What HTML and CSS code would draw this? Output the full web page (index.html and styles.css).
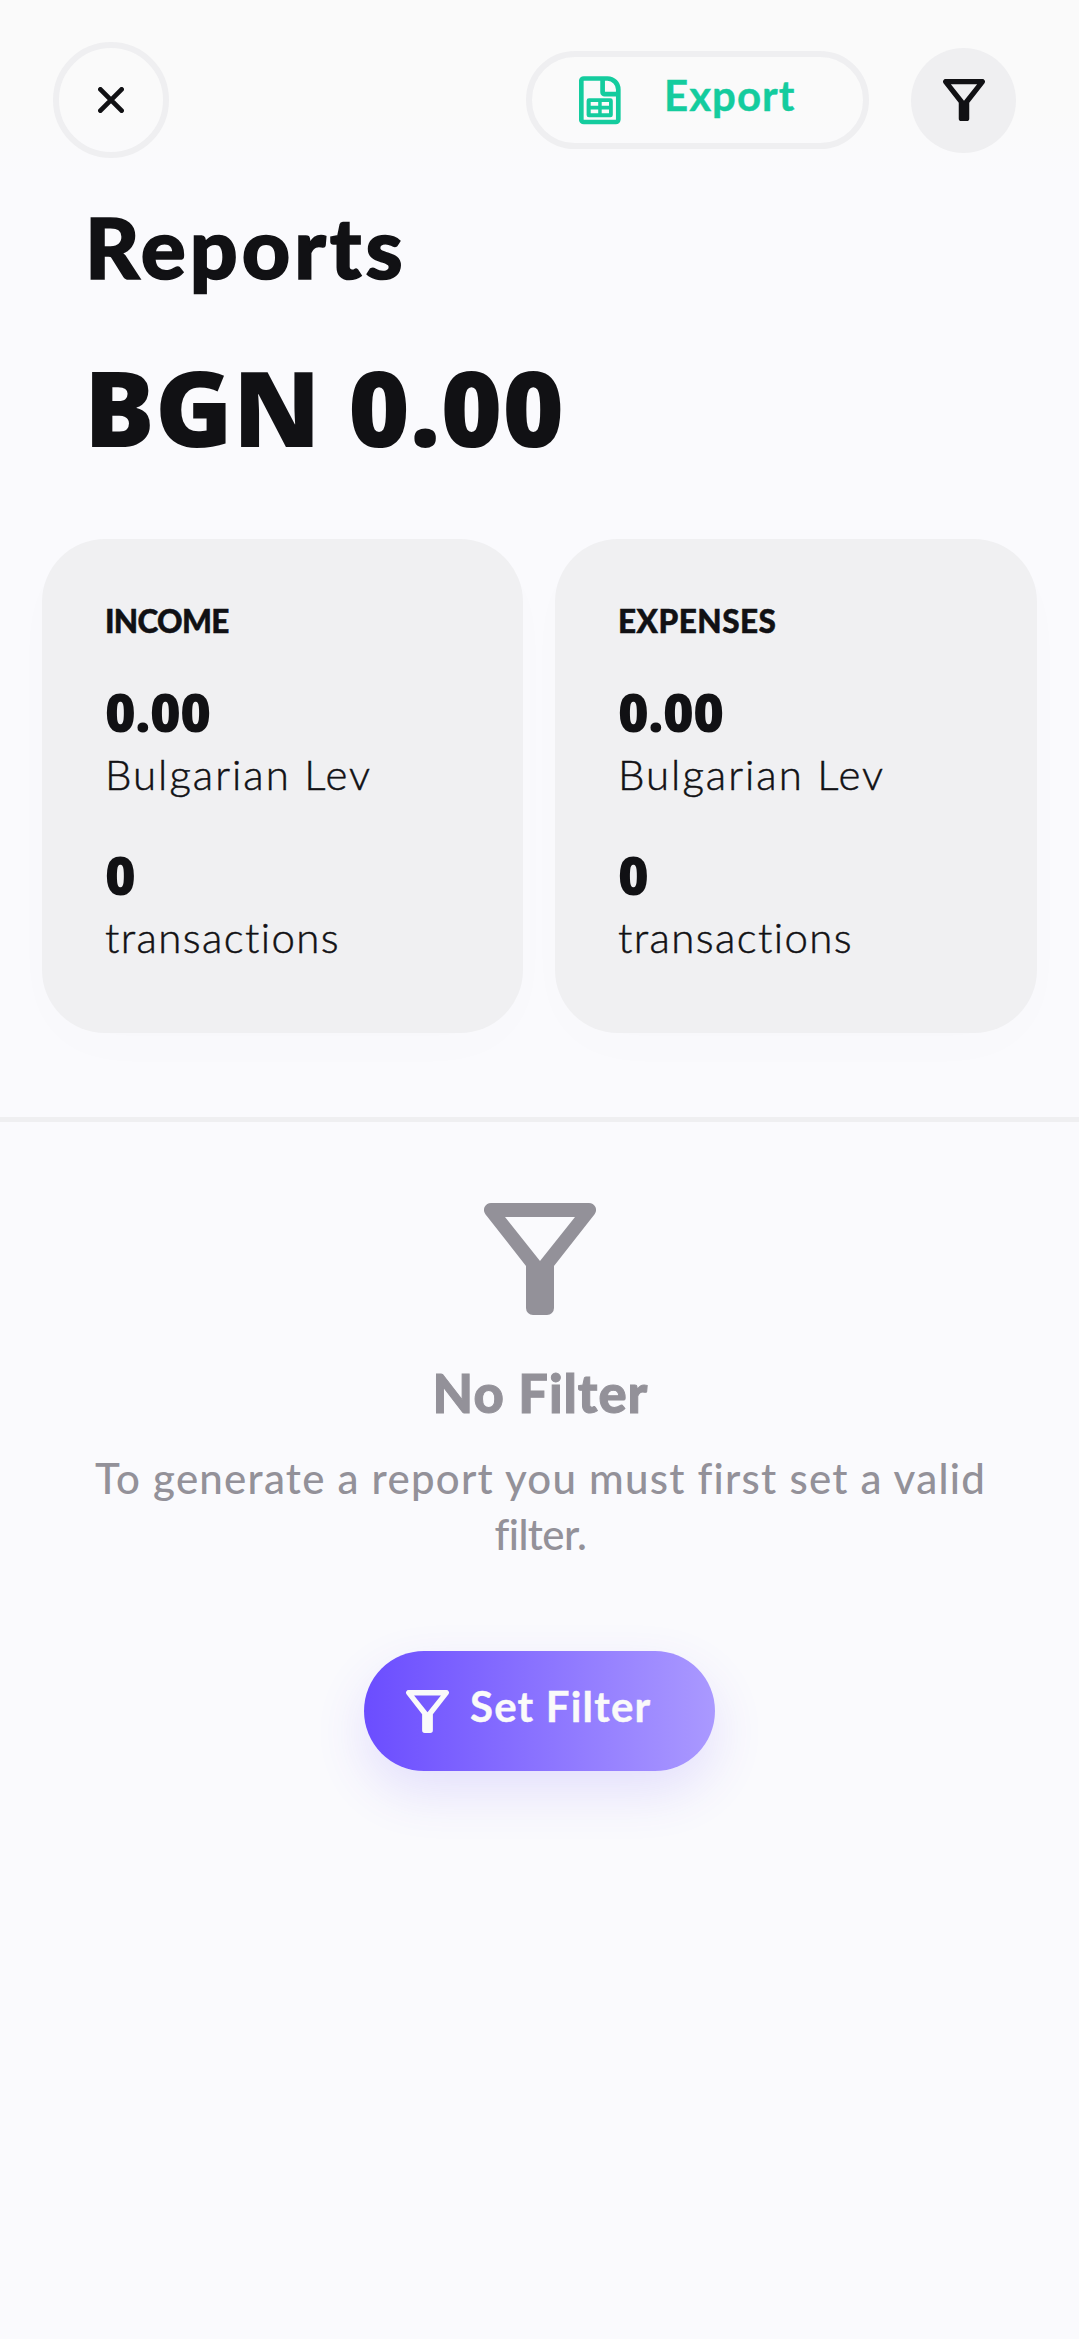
FILE: index.html
```html
<!DOCTYPE html>
<html lang="en">
<head>
<meta charset="utf-8">
<title>Reports</title>
<link rel="stylesheet" href="styles.css">
</head>
<body>
<svg class="sprite" aria-hidden="true">
  <symbol id="funnel" viewBox="0 0 16 16">
    <path fill="currentColor" fill-rule="evenodd" d="M1 0H15A1 1 0 0 1 15.8 1.6L10 9V15a1 1 0 0 1-1 1H7a1 1 0 0 1-1-1V9L.2 1.6A1 1 0 0 1 1 0ZM3 2L8 8.3L13 2Z"/>
  </symbol>
</svg>
<main class="screen">
  <header class="toolbar">
    <button class="close" aria-label="Close">
      <svg width="26" height="26" viewBox="0 0 26 26"><path d="M2.4 2.4L23.6 23.6M23.6 2.4L2.4 23.6" stroke="currentColor" stroke-width="4.8" stroke-linecap="round"/></svg>
    </button>
    <button class="export">
      <svg width="42" height="49" viewBox="0 0 42 49" fill="none">
        <path d="M4.8 2.5H28.5C34.5 2.5 39.3 7.5 39.3 13.5V43.5A2.5 2.5 0 0 1 36.8 46H4.8A2.5 2.5 0 0 1 2.3 43.5V5A2.5 2.5 0 0 1 4.8 2.5ZM23.6 2.5V16.2A2 2 0 0 0 25.6 18.2H39.3" stroke="currentColor" stroke-width="4.7"/>
        <path fill="currentColor" fill-rule="evenodd" d="M10 22.3H31.4A2.4 2.4 0 0 1 33.8 24.7V38.9A2.4 2.4 0 0 1 31.4 41.3H10A2.4 2.4 0 0 1 7.6 38.9V24.7A2.4 2.4 0 0 1 10 22.3ZM11.7 26V29.8H19.2V26ZM22.7 26V29.8H30V26ZM11.7 33.6V37.2H19.2V33.6ZM22.7 33.6V37.2H30V33.6Z"/>
      </svg>
      <span class="export-text">Export</span>
    </button>
    <button class="filter" aria-label="Filter"><svg width="42" height="42"><use href="#funnel"/></svg></button>
  </header>
  <h1 class="title">Reports</h1>
  <p class="balance">BGN 0.00</p>
  <section class="cards">
    <article class="card">
      <h2 class="card-title income">INCOME</h2>
      <p class="value">0.00</p>
      <p class="label currency">Bulgarian Lev</p>
      <p class="value count">0</p>
      <p class="label">transactions</p>
    </article>
    <article class="card">
      <h2 class="card-title">EXPENSES</h2>
      <p class="value">0.00</p>
      <p class="label currency">Bulgarian Lev</p>
      <p class="value count">0</p>
      <p class="label">transactions</p>
    </article>
  </section>
  <section class="empty">
    <svg width="112" height="112"><use href="#funnel"/></svg>
    <h2 class="empty-title">No Filter</h2>
    <p class="empty-text">To generate a report you must first set a valid <span class="last-word">filter.</span></p>
    <button class="set-filter"><svg width="43" height="43"><use href="#funnel"/></svg><span>Set Filter</span></button>
  </section>
</main>
</body>
</html>
```
FILE: styles.css
```css
* { box-sizing: border-box; margin: 0; padding: 0; }
body {
  background: #fafafd;
  color: #111114;
  font-family: Lato, sans-serif;
}
button { border: 0; background: none; color: inherit; font: inherit; }
svg { display: block; flex: none; }
.sprite { position: absolute; width: 0; height: 0; }
.screen { min-height: 2339px; }

.toolbar {
  display: flex;
  align-items: center;
  height: 200px;
  padding: 0 63px 0 53px;
  background: linear-gradient(#fafafa 110px, #fafafd 176px);
}
.close {
  display: grid;
  place-items: center;
  width: 116px;
  height: 116px;
  border: 6px solid #efeff1;
  border-radius: 50%;
}
.export {
  display: flex;
  align-items: center;
  width: 343px;
  height: 98px;
  margin-left: auto;
  padding-left: 47px;
  border: 6px solid #efeff1;
  border-radius: 49px;
  color: #14cc9e;
  font-size: 42px;
  font-weight: 700;
  letter-spacing: 1px;
  -webkit-text-stroke: .4px currentColor;
}
.export-text { margin: -10px 0 0 43px; }
.filter {
  display: grid;
  place-items: center;
  width: 105px;
  height: 105px;
  margin-left: 42px;
  border-radius: 50%;
  background: #efeff1;
}

.title {
  margin-left: 85px;
  font-size: 84px;
  font-weight: 900;
  line-height: 93px;
  letter-spacing: 4px;
  -webkit-text-stroke: 1.6px currentColor;
}
.balance {
  margin: 54px 0 72px 84px;
  font: 800 105px/120px "Open Sans", sans-serif;
  letter-spacing: .25px;
}

.cards {
  display: grid;
  grid-template-columns: 481px 482px;
  gap: 32px;
  padding: 0 42px 84px;
  border-bottom: 5px solid #efeff1;
}
.card {
  height: 494px;
  padding: 62px 63px 0;
  border-radius: 63px;
  background: #f0f0f2;
  box-shadow: 0 16px 60px rgba(17, 17, 20, .01);
}
.card-title {
  font-size: 31.5px;
  font-weight: 900;
  line-height: 40px;
  letter-spacing: .5px;
  -webkit-text-stroke: .5px currentColor;
}
.income { letter-spacing: -.7px; }
.value {
  margin-top: 41px;
  font: 800 52.5px/60px "Open Sans", sans-serif;
  letter-spacing: -.5px;
}
.count { margin-top: 43px; }
.label {
  margin-top: 4px;
  font-size: 42px;
  font-weight: 300;
  line-height: 56px;
  letter-spacing: 1.4px;
  -webkit-text-stroke: .5px currentColor;
}
.currency { letter-spacing: 2px; }

.empty {
  display: flex;
  flex-direction: column;
  align-items: center;
  padding-top: 81px;
  color: #939199;
  text-align: center;
}
.empty-title {
  margin-top: 48px;
  padding-left: 2px;
  font-size: 52.5px;
  font-weight: 900;
  line-height: 60px;
  letter-spacing: 1px;
  -webkit-text-stroke: 1px currentColor;
}
.empty-text {
  width: 960px;
  margin-top: 27px;
  padding-left: 2px;
  font-size: 42px;
  font-weight: 500;
  line-height: 56px;
  letter-spacing: 1.25px;
}
.last-word { letter-spacing: -.6px; }
.set-filter {
  display: flex;
  align-items: center;
  width: 351px;
  height: 120px;
  margin-top: 89px;
  padding-left: 42px;
  border-radius: 60px;
  background: linear-gradient(90deg, #6b4dff, #aa99ff);
  box-shadow: 0 21px 52px rgba(92, 61, 245, .14);
  color: #fafafa;
  font-size: 42px;
  font-weight: 700;
  letter-spacing: 1.2px;
  -webkit-text-stroke: .4px currentColor;
}
.set-filter span { margin: -10px 0 0 21px; }
```
